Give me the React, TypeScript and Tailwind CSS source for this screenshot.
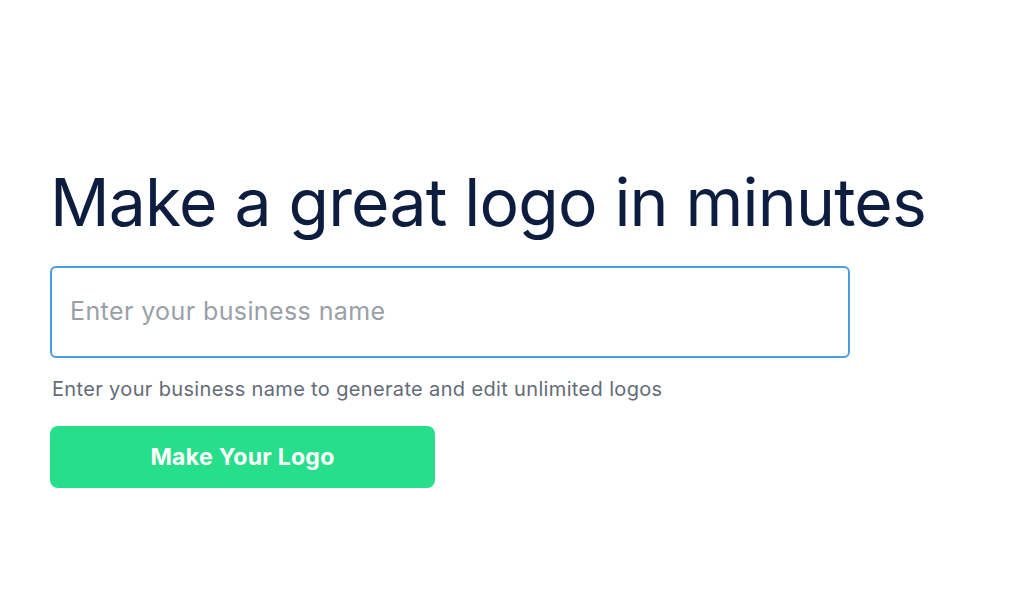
export default function App() {
  return (
    <div className="w-[1024px] h-[614px] bg-white font-['Inter',sans-serif]">
      <div className="pl-[50px] pt-[160px]">
        <h1 className="text-[66px] leading-[84px] text-[#0c1d40] tracking-[-0.8px]">Make a great logo in minutes</h1>
        <div className="mt-[22px] w-[800px] h-[92px] rounded-[6px] border-2 border-[#4a9de3] flex items-center px-[18px]">
          <input
            className="w-full outline-none text-[25px] tracking-[0.4px] text-[#0c1d40] placeholder:text-[#9a9fa8]"
            placeholder="Enter your business name"
          />
        </div>
        <p className="mt-[16px] text-[20px] tracking-[0.35px] text-[#646b78] pl-[2px]">Enter your business name to generate and edit unlimited logos</p>
        <button className="mt-[22px] w-[385px] h-[62px] rounded-[8px] bg-[#27de8a] text-white text-[23px] tracking-[0.3px] font-bold">
          Make Your Logo
        </button>
      </div>
    </div>
  );
}
